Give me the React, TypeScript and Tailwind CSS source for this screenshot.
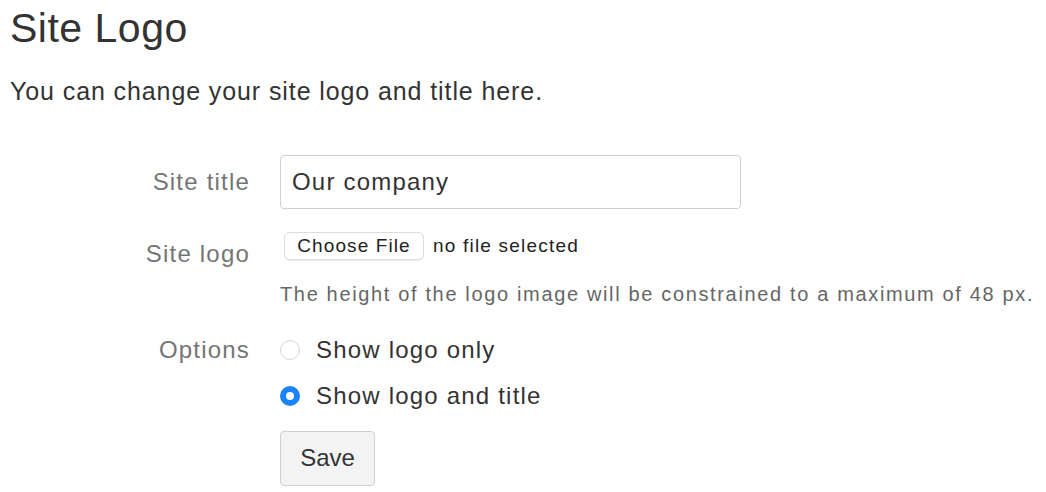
import { useState } from "react";

export default function App() {
  const [option, setOption] = useState("both");

  return (
    <div className="w-[1046px] h-[492px] bg-white px-[10px] font-['Liberation_Sans',Arial,sans-serif] text-[#333]">
      <h1 className="pt-[4px] text-[41px] leading-[48px] tracking-[0.5px]">Site Logo</h1>
      <p className="mt-[24px] text-[25px] leading-[30px] tracking-[0.9px]">
        You can change your site logo and title here.
      </p>

      <div className="mt-[49px] grid grid-cols-[240px_1fr] gap-x-[30px] text-[24px] tracking-[1.2px]">
        <label className="flex h-[54px] items-center justify-end text-[#757575]">
          Site title
        </label>
        <div>
          <input
            defaultValue="Our company"
            className="h-[54px] w-[461px] rounded-[4px] border border-[#cfcfcf] px-[11px] text-[24px] tracking-[1.2px] text-[#333] outline-none"
          />
        </div>

        <label className="mt-[23px] flex justify-end pt-[8px] leading-[28px] text-[#757575]">
          Site logo
        </label>
        <div className="mt-[23px]">
          <div className="flex items-center">
            <button className="ml-[4px] h-[28px] w-[140px] rounded-[6px] border border-[#dcdcdc] bg-white text-[19px] leading-[26px] tracking-[1.1px] text-[#222] shadow-[0_1px_1px_rgba(0,0,0,0.08)]">
              Choose File
            </button>
            <span className="ml-[9px] text-[19px] tracking-[1.2px] text-[#222]">no file selected</span>
          </div>
          <p className="mt-[21px] text-[20px] leading-[24px] tracking-[1.65px] text-[#666]">
            The height of the logo image will be constrained to a maximum of 48 px.
          </p>
        </div>

        <label className="mt-[30px] flex h-[28px] items-center justify-end text-[#757575]">
          Options
        </label>
        <div className="mt-[30px] flex flex-col gap-[18px]">
          {[
            ["logo", "Show logo only"],
            ["both", "Show logo and title"],
          ].map(([value, text]) => (
            <label key={value} className="flex h-[28px] items-center gap-[16px] text-[#333]">
              <span
                onClick={() => setOption(value)}
                className={
                  option === value
                    ? "flex h-[20px] w-[20px] items-center justify-center rounded-full bg-[#1a82fb]"
                    : "flex h-[20px] w-[20px] items-center justify-center rounded-full border border-[#d4d4d4] bg-white"
                }
              >
                {option === value && <span className="h-[8px] w-[8px] rounded-full bg-white" />}
              </span>
              {text}
            </label>
          ))}
          <div className="mt-[3px]">
            <button className="h-[55px] w-[95px] rounded-[4px] border border-[#cfcfcf] bg-[#f3f3f3] text-[24px] tracking-normal text-[#333]">
              Save
            </button>
          </div>
        </div>
      </div>
    </div>
  );
}
